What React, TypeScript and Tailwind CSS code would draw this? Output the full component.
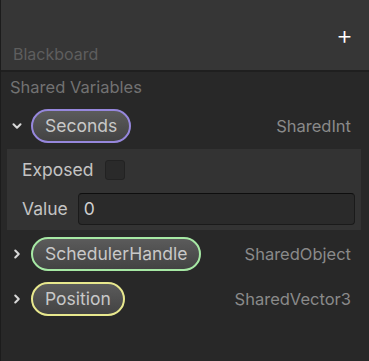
import { ChevronDown, ChevronRight } from "lucide-react";

const font = { fontFamily: "Inter, 'Noto Sans', sans-serif" };

function Pill({ label, ring }: { label: string; ring: string }) {
  return (
    <div
      className={`flex h-[34px] items-center rounded-full border-2 bg-gradient-to-b from-[#5b5b5b] to-[#434343] px-[12px] text-[17.5px] text-[#c8c8c8] ${ring}`}
    >
      {label}
    </div>
  );
}

function VarRow({
  label,
  type,
  ring,
  open,
}: {
  label: string;
  type: string;
  ring: string;
  open?: boolean;
}) {
  return (
    <div className="flex h-[34px] items-center pr-[18px]">
      <div className="flex w-[30px] items-center justify-center pl-[2px]">
        {open ? (
          <ChevronDown size={14} strokeWidth={3.5} className="text-[#d8d8d8]" />
        ) : (
          <ChevronRight size={14} strokeWidth={3.5} className="text-[#d8d8d8]" />
        )}
      </div>
      <Pill label={label} ring={ring} />
      <div className="ml-auto text-[16.5px] text-[#8a8a8a]">{type}</div>
    </div>
  );
}

export default function App() {
  return (
    <div
      style={font}
      className="flex h-[361px] w-[369px] flex-col border-l border-[#1c1c1c] bg-[#282828]"
    >
      <header className="relative h-[72px] border-b-2 border-[#1f1f1f] bg-[#363636]">
        <span className="absolute right-[16px] top-[22px] text-[26px] font-light leading-none text-white">
          +
        </span>
        <div className="absolute bottom-[4px] left-[12px] text-[16px] text-[#5e5e5e]">
          Blackboard
        </div>
      </header>
      <div className="mt-[3px] pl-[9px] text-[16.5px] leading-[24px] text-[#727272]">
        Shared Variables
      </div>
      <div className="mt-[10px]">
        <VarRow label="Seconds" type="SharedInt" ring="border-[#9687dc]" open />
      </div>
      <section className="mt-[6px] ml-[6px] mr-[8px] flex flex-col gap-[12px] bg-[#333333] pl-[15px] pr-[6px] pt-[10px] pb-[5px] text-[17.5px] text-[#c4c4c4]">
        <div className="flex h-[22px] items-center gap-[12px]">
          <span>Exposed</span>
          <span className="h-[20px] w-[20px] rounded-[3px] border border-[#222] bg-[#2a2a2a]" />
        </div>
        <div className="flex items-center gap-[10px]">
          <span>Value</span>
          <div className="flex h-[32px] flex-1 items-center rounded-[4px] border border-[#1a1a1a] border-t-[#0e0e0e] bg-[#2a2a2a] px-[5px] text-[#d0d0d0]">
            0
          </div>
        </div>
      </section>
      <div className="mt-[7px] flex flex-col gap-[11px]">
        <VarRow label="SchedulerHandle" type="SharedObject" ring="border-[#a6e8a4]" />
        <VarRow label="Position" type="SharedVector3" ring="border-[#e8e88e]" />
      </div>
    </div>
  );
}
